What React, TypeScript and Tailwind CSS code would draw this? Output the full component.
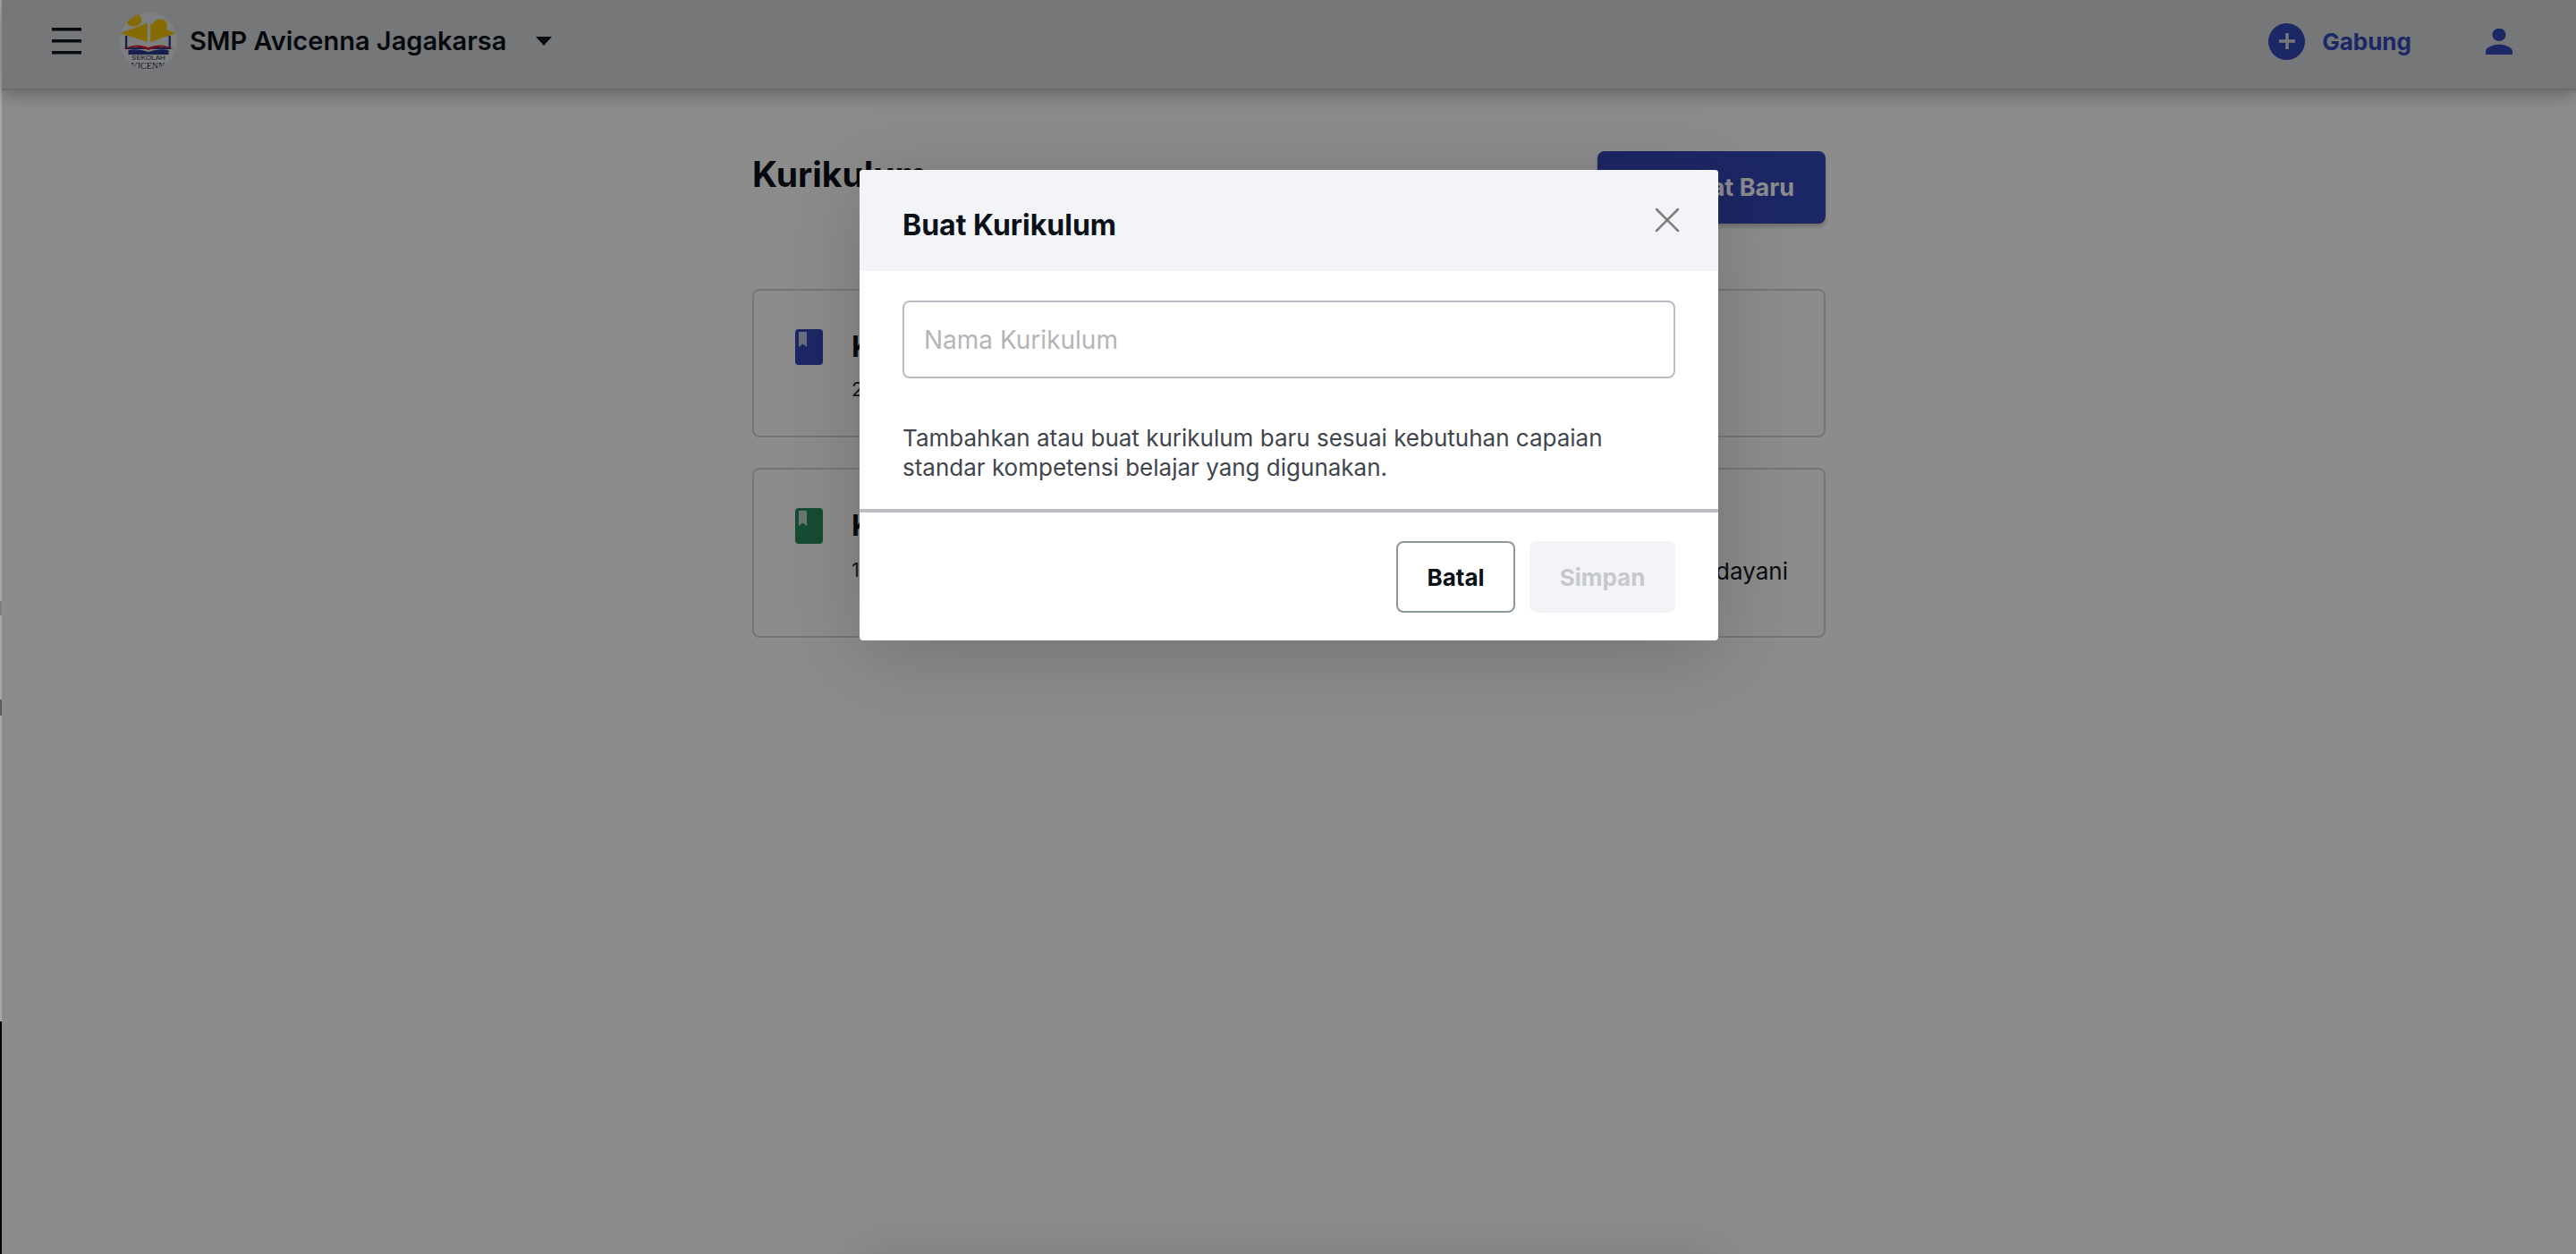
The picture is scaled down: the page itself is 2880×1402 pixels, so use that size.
import React from "react";
import { X } from "lucide-react";

function BookIcon({ color }: { color: string }) {
  return (
    <svg width="31" height="40" viewBox="0 0 31 40" className="shrink-0">
      <rect x="0" y="0" width="31" height="40" rx="4" fill={color} />
      <path d="M4 3 H13 V20 L8.5 16.5 L4 20 Z" fill="#ffffff" fillOpacity="0.7" />
    </svg>
  );
}

function Logo() {
  return (
    <div className="relative w-[64px] h-[64px] rounded-full bg-[#e6e7ea] overflow-hidden shrink-0">
      <svg width="64" height="64" viewBox="5 0 54 64" preserveAspectRatio="none" className="absolute left-0 top-0">
        <circle cx="18" cy="8" r="7.5" fill="#f4c400" />
        <circle cx="43" cy="14" r="7" fill="#f4c400" stroke="#e6e7ea" strokeWidth="0.6" />
        <path d="M31 12 V33 L5 23 Z" fill="#f4c400" />
        <path d="M34 12 V33 L58 23 Z" fill="#f4c400" />
        <path d="M11 26 V40 H52 V26" fill="none" stroke="#2b3a8c" strokeWidth="2" />
        <path d="M8 41 Q20 33 32 39 Q44 33 56 41 L52 40 Q42 36 32 42 Q22 36 12 40 Z" fill="#d3202a" />
        <path d="M13 42 Q23 40 32 44 Q41 40 51 42 V47 H13 Z" fill="#2b3a8c" />
      </svg>
      <div className="absolute left-0 right-0 top-[47px] text-center text-[8px] leading-[8px] font-['Liberation_Sans',sans-serif] text-[#2b2f3a]">SEKOLAH</div>
      <div className="absolute left-0 right-0 top-[55px] text-center text-[10px] leading-[9px] font-['Liberation_Serif',serif] text-[#1c2140]">AVICENNA</div>
    </div>
  );
}

function Card({ color, title, sub, subGap, right, h }: { color: string; title: string; sub: string; subGap: string; right?: string; h: string }) {
  return (
    <div className={`flex justify-between border-2 border-[#d6d8de] rounded-lg pl-[46px] pr-[40px] pt-[43px] ${h}`}>
      <div className="flex gap-[32px]">
        <BookIcon color={color} />
        <div>
          <div className="text-[32px] leading-[40px] font-bold text-[#0a1118]">{title}</div>
          <div className={`text-[22px] leading-[28px] text-[#2a2f36] ${subGap}`}>{sub}</div>
        </div>
      </div>
      {right && <div className="text-[26px] leading-[34px] text-[#11161c] self-end mb-[55px]">{right}</div>}
    </div>
  );
}

export default function App() {
  return (
    <div className="flex w-[2880px] h-[1402px] overflow-hidden bg-white font-['Inter',sans-serif]">
      {/* window edge */}
      <div className="w-[2px] h-full flex flex-col shrink-0 bg-[#a8a8a8]">
        <div className="h-[672px]" />
        <div className="h-[16px] bg-[#7d7d7d]" />
        <div className="h-[94px]" />
        <div className="h-[18px] bg-[#5c5c5c]" />
        <div className="h-[342px]" />
        <div className="flex-1 bg-[#03060a]" />
      </div>

      <div className="relative flex-1 h-full">
        {/* page */}
        <header className="h-[101px] bg-[#d7d9dc] border-b-2 border-[#c2c4c8] shadow-[0_4px_20px_rgba(0,0,0,0.3)] flex items-center pl-[56px] pr-[66px] pb-[7px]">
          <svg width="33" height="30" viewBox="0 0 33 30" className="shrink-0 text-[#10151b]" fill="currentColor">
            <rect x="0" y="0" width="33" height="3.5" />
            <rect x="0" y="13" width="33" height="3.5" />
            <rect x="0" y="26" width="33" height="3.5" />
          </svg>
          <div className="ml-[43px]"><Logo /></div>
          <span className="ml-[14px] text-[29px] font-semibold text-[#0a1118]">SMP Avicenna Jagakarsa</span>
          <span className="ml-[33px] w-0 h-0 border-x-[9px] border-x-transparent border-t-[10px] border-t-[#0a1118]" />
          <div className="flex-1" />
          <span className="w-[41px] h-[41px] rounded-full bg-[#3347b9] flex items-center justify-center">
            <svg width="22" height="22" viewBox="0 0 22 22"><path d="M11 2 V20 M2 11 H20" stroke="#d7d9dc" strokeWidth="3.6" /></svg>
          </span>
          <span className="ml-[19px] text-[26px] font-bold text-[#3347b9]">Gabung</span>
          <span className="ml-[78px] w-[40px] flex justify-center">
            <svg width="40" height="40" viewBox="0 0 24 24" className="text-[#3347b9]" fill="currentColor">
              <path d="M12 12c2.7 0 4.5-1.9 4.5-4.3S14.7 3.4 12 3.4 7.5 5.3 7.5 7.7 9.3 12 12 12zm0 2.3c-3 0-9 1.5-9 4.5v2.2h18v-2.2c0-3-6-4.5-9-4.5z" />
            </svg>
          </span>
        </header>

        <main className="w-[1200px] mx-auto pt-[68px]">
          <div className="flex justify-between items-start">
            <h1 className="text-[39px] leading-[52px] font-bold text-[#0a1118]">Kurikulum</h1>
            <button className="w-[255px] h-[81px] rounded-lg bg-[#3347b9] shadow-[0_4px_4px_rgba(0,0,0,0.2)] flex items-center justify-end pr-[35px] pt-[2px] text-[27px] font-bold text-white">
              Buat Baru
            </button>
          </div>
          <div className="flex flex-col gap-[34px] mt-[73px]">
            <Card color="#3347b9" title="Kurikulum 2013" sub="2 Tingkat" subGap="mt-[13px]" h="h-[166px]" />
            <Card color="#2a8a60" title="Kurikulum Merdeka" sub="1 Tingkat" subGap="mt-[15px]" right="Tingkat didayani" h="h-[190px]" />
          </div>
        </main>

        {/* overlay + dialog */}
        <div className="absolute inset-0 bg-black/45 flex justify-center pt-[190px]">
          <div className="w-[960px] h-[526px] bg-white rounded-[4px] shadow-[0_16px_90px_rgba(0,0,0,0.18)] flex flex-col">
            <div className="h-[113px] bg-[#f3f4f8] rounded-t-[4px] flex items-center justify-between pl-[48px] pr-[33px] shrink-0">
              <h2 className="text-[32px] font-bold text-[#0a1118] mt-[10px]">Buat Kurikulum</h2>
              <X size={48} strokeWidth={1.25} className="text-[#7c7c7c] -mt-[2px]" />
            </div>
            <div className="px-[48px] pt-[33px] h-[266px] shrink-0">
              <input
                readOnly
                placeholder="Nama Kurikulum"
                className="w-full h-[87px] border-2 border-[#babcc4] rounded-lg px-[22px] text-[28px] outline-none placeholder:text-[#b4b5b8]"
              />
              <p className="mt-[50px] text-[26px] leading-[33px] text-[#40454e]">
                Tambahkan atau buat kurikulum baru sesuai kebutuhan capaian standar kompetensi belajar yang digunakan.
              </p>
            </div>
            <div className="h-[4px] bg-[#bcbec6] shrink-0" />
            <div className="flex justify-end gap-[16px] pt-[32px] pr-[48px]">
              <button className="w-[133px] h-[80px] border-2 border-[#8b979b] rounded-lg text-[26px] font-bold text-[#0a1118] bg-white">Batal</button>
              <button disabled className="w-[163px] h-[80px] rounded-lg text-[26px] font-bold text-[#c6c8cd] bg-[#f3f4f8]">Simpan</button>
            </div>
          </div>
        </div>
        {/* soft shadow of an off-screen sheet */}
        <div className="absolute left-[959px] bottom-[-40px] w-[960px] h-[40px] shadow-[0_0_50px_rgba(0,0,0,0.12)]" />
      </div>
    </div>
  );
}
